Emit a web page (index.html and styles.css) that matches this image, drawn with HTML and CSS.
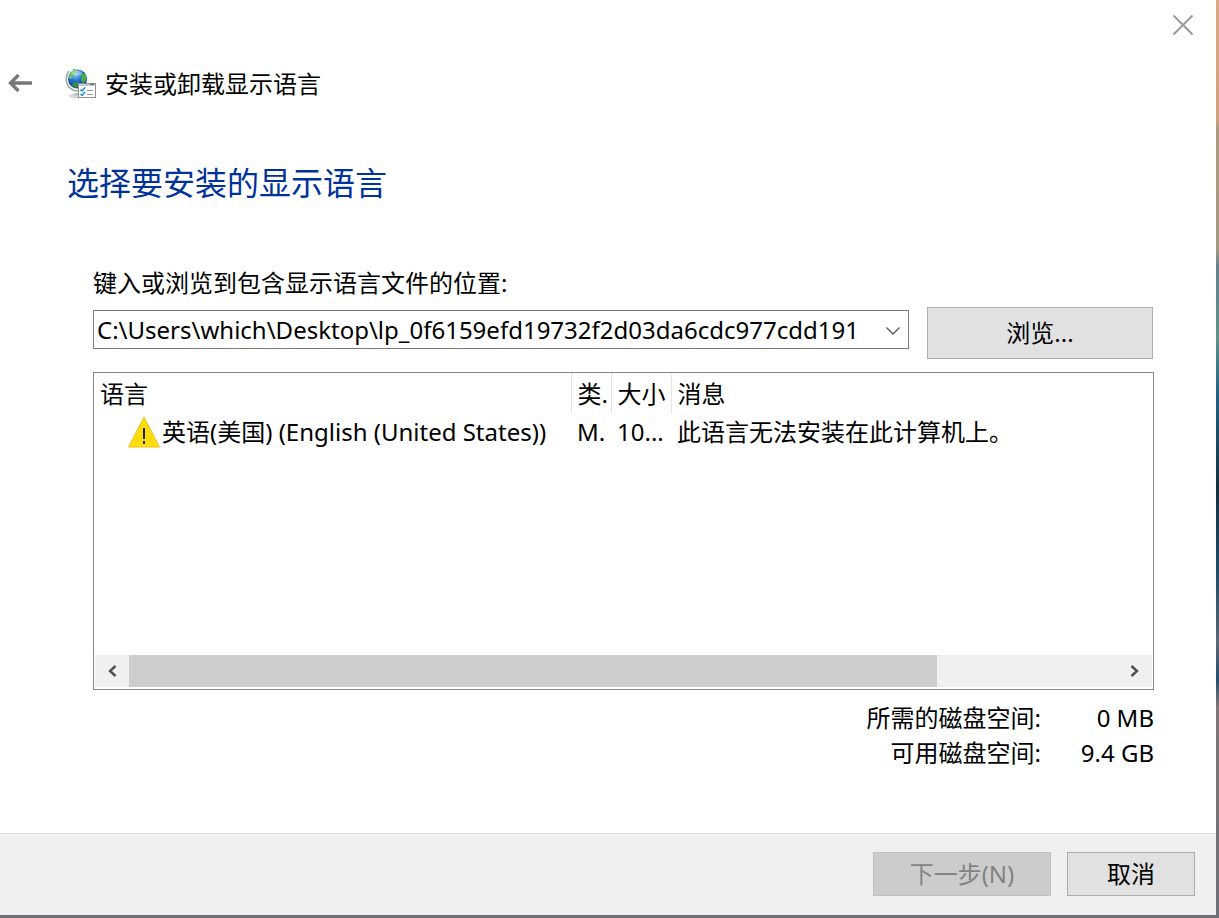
FILE: index.html
```html
<!DOCTYPE html>
<html lang="zh-CN">
<head>
    <meta charset="UTF-8">
    <meta name="viewport" content="width=device-width, initial-scale=1.0">
    <title>安装或卸载显示语言</title>
    <link rel="stylesheet" href="styles.css">
</head>
<body>

<div class="dialog">
    <div class="titlebar">
        <button type="button" class="close" aria-label="关闭">
            <svg width="22" height="22" viewBox="0 0 22 22"><path d="M1.500 1.500L20.500 20.500M20.500 1.500L1.500 20.500" stroke="#97979a" stroke-width="1.800" fill="none"/></svg>
        </button>
    </div>

    <header>
        <button type="button" class="back" aria-label="返回">
            <svg width="24" height="20" viewBox="0 0 24 20"><path d="M24 9H3M10.500 1L2.500 9L10.500 17" stroke="#777" stroke-width="3.400" fill="none"/></svg>
        </button>
        <svg class="logo" width="32" height="34" viewBox="0 0 32 34">
            <defs>
                <radialGradient id="globe" cx="0.400" cy="0.250" r="0.750">
                    <stop offset="0" stop-color="#8fd0f5"/>
                    <stop offset="0.450" stop-color="#2a73d0"/>
                    <stop offset="1" stop-color="#0b2a86"/>
                </radialGradient>
            </defs>
            <ellipse cx="12" cy="29" rx="8" ry="2.500" fill="#d5d9dc"/>
            <path d="M8 28Q12 24 16 28" fill="#b4babe"/>
            <path d="M4 4C-1 11 1 21 10 23.500C14 24.500 17 24 19 22M8 2L11 4" fill="none" stroke="#a6adb2" stroke-width="1.800"/>
            <circle cx="12.500" cy="12" r="9.500" fill="url(#globe)"/>
            <path d="M5 7C6 4 9 2.500 12 2.500L11 6L8 9L6 12L3.500 11Z" fill="#6fc566"/>
            <path d="M17 6L21 8L21.500 13L18 16L16 13L17 10L15 8Z" fill="#49b045"/>
            <path d="M9 15L13 16L13 20L10 21L7 18Z" fill="#2e9240"/>
            <ellipse cx="12" cy="6" rx="5" ry="2.500" fill="#fff" opacity="0.350"/>
            <rect x="13.500" y="16.500" width="17" height="14" fill="#fff" stroke="#8c9296"/>
            <path d="M14 18H30" stroke="#c3ccd3" stroke-width="2"/>
            <path d="M25 17.500H29" stroke="#596a78"/>
            <path d="M15.500 22.500L17 24L20 20.500M15.500 27L17 28.500L20 25" fill="none" stroke="#1686cf" stroke-width="1.500"/>
            <path d="M22 23.500H28M22 27.500H28" stroke="#9299a0" stroke-width="1.200"/>
        </svg>
        <span class="caption">安装或卸载显示语言</span>
    </header>

    <main>
        <h1>选择要安装的显示语言</h1>

        <div class="content">
            <label for="path">键入或浏览到包含显示语言文件的位置:</label>
            <div class="path-row">
                <div class="combo">
                    <select id="path">
                        <option>C:\Users\which\Desktop\lp_0f6159efd19732f2d03da6cdc977cdd191</option>
                    </select>
                    <svg class="chevron" width="16" height="10" viewBox="0 0 16 10"><path d="M1.500 1.500L8 8L14.500 1.500" stroke="#555" stroke-width="1.300" fill="none"/></svg>
                </div>
                <button type="button" class="btn browse">浏览...</button>
            </div>

            <div class="list">
                <table>
                    <colgroup>
                        <col class="col-lang">
                        <col class="col-type">
                        <col class="col-size">
                        <col>
                    </colgroup>
                    <thead>
                        <tr>
                            <th>语言</th>
                            <th>类.</th>
                            <th>大小</th>
                            <th>消息</th>
                        </tr>
                    </thead>
                    <tbody>
                        <tr>
                            <td>
                                <div class="lang">
                                    <svg width="32" height="32" viewBox="0 0 32 32">
                                        <path d="M16 1L31.500 31H0.500Z" fill="#ffdd0a" stroke="#f0bd1c"/>
                                        <path d="M16 12V23M16 25V28" stroke="#222" stroke-width="2"/>
                                    </svg>
                                    <span>英语(美国) (English (United States))</span>
                                </div>
                            </td>
                            <td>M.</td>
                            <td>10...</td>
                            <td>此语言无法安装在此计算机上。</td>
                        </tr>
                    </tbody>
                </table>
                <div class="scrollbar">
                    <button type="button" aria-label="向左滚动">
                        <svg width="10" height="12" viewBox="0 0 10 12"><path d="M8.500 1L3 6L8.500 11" stroke="#505050" stroke-width="2.400" fill="none"/></svg>
                    </button>
                    <div class="track"><div class="thumb"></div></div>
                    <button type="button" aria-label="向右滚动">
                        <svg width="10" height="12" viewBox="0 0 10 12"><path d="M1.500 1L7 6L1.500 11" stroke="#505050" stroke-width="2.400" fill="none"/></svg>
                    </button>
                </div>
            </div>

            <dl class="space">
                <dt>所需的磁盘空间:</dt>
                <dd>0 MB</dd>
                <dt>可用磁盘空间:</dt>
                <dd>9.4 GB</dd>
            </dl>
        </div>
    </main>

    <footer>
        <button type="button" class="btn next" disabled>下一步(N)</button>
        <button type="button" class="btn cancel">取消</button>
    </footer>
</div>

</body>
</html>
```
FILE: styles.css
```css
* {
    box-sizing: border-box;
}

/* wallpaper, seen at the right and bottom edges */
body {
    margin: 0;
    min-height: 100vh;
    padding: 0 3px 3px 0;
    display: flex;
    background: linear-gradient(#d9a983 0%, #cfa27c 13%, #a99a80 14%, #a39a82 27%, #66818c 29%, #5c9188 37%, #1d6283 43%, #14303f 53%, #1d4b66 62%, #5b6674 70%, #24506f 74%, #7f7676 77%, #6d7078 100%);
    color: #000;
    font-family: "Noto Sans", "Noto Sans CJK SC", sans-serif;
    font-size: 24px;
    line-height: 36px;
}

button,
select {
    font: inherit;
    color: inherit;
}

svg {
    display: block;
    flex: none;
}

.dialog {
    flex: 1;
    min-width: 0;
    display: flex;
    flex-direction: column;
    background: #fff;
}

.close,
.back,
.scrollbar button {
    border: none;
    background: none;
    padding: 0;
}

.titlebar {
    display: flex;
    justify-content: flex-end;
    padding: 14px 22px 0 0;
}

header {
    display: flex;
    align-items: center;
    padding: 30px 8px 0;
}

.logo {
    margin-left: 33px;
}

.caption {
    margin-left: 8px;
}

main {
    flex: 1;
    padding: 57px 62px 0 67px;
}

h1 {
    margin: 0;
    font-size: 32px;
    font-weight: normal;
    line-height: 48px;
    color: #003399;
}

.content {
    padding: 58px 0 0 26px;
}

label {
    display: block;
}

.path-row {
    display: flex;
    align-items: center;
    gap: 18px;
    margin-top: 6px;
}

.combo {
    position: relative;
    flex: 1;
    min-width: 0;
    margin-bottom: 7px;
}

.combo select {
    display: block;
    width: 100%;
    height: 39px;
    padding: 0 36px 0 3px;
    appearance: none;
    border: 1px solid #7a7a7a;
    border-radius: 0;
    background: #fff;
}

/* drawn over the select in place of the native arrow */
.chevron {
    position: absolute;
    right: 8px;
    top: 16px;
    pointer-events: none;
}

.btn {
    height: 44px;
    padding: 0;
    border: 1px solid #adadad;
    background: #e1e1e1;
}

.browse {
    width: 226px;
    height: 52px;
    margin-right: 1px;
}

.list {
    display: flex;
    flex-direction: column;
    min-height: 318px;
    margin-top: 13px;
    border: 1px solid #828790;
}

table {
    width: 100%;
    table-layout: fixed;
    border-collapse: collapse;
}

.col-lang {
    width: 477px;
}

.col-type {
    width: 40px;
}

.col-size {
    width: 60px;
}

th,
td {
    padding: 0 0 0 6px;
    font-weight: normal;
    text-align: left;
    white-space: nowrap;
}

th {
    height: 41px;
    border-right: 1px solid #e5e5e5;
}

th:last-child {
    border-right: none;
}

.lang {
    display: flex;
    align-items: center;
    gap: 2px;
    padding-left: 28px;
}

.scrollbar {
    display: flex;
    height: 32px;
    margin: auto 1px 2px;
    background: #f0f0f0;
}

.scrollbar button {
    width: 34px;
    display: flex;
    align-items: center;
    justify-content: center;
}

.track {
    flex: 1;
}

.thumb {
    width: 81.7%;
    height: 100%;
    background: #cdcdcd;
}

.space {
    display: grid;
    grid-template-columns: 1fr 113px;
    margin: 10px 0 24px;
    line-height: 35px;
    text-align: right;
}

.space dd {
    margin: 0;
}

footer {
    display: flex;
    justify-content: flex-end;
    gap: 16px;
    padding: 18px 21px 19px;
    border-top: 1px solid #dfdfdf;
    background: #f0f0f0;
}

.next {
    width: 178px;
}

.next:disabled {
    color: #838383;
    border-color: #bfbfbf;
    background: #cccccc;
}

.cancel {
    width: 128px;
}
```
